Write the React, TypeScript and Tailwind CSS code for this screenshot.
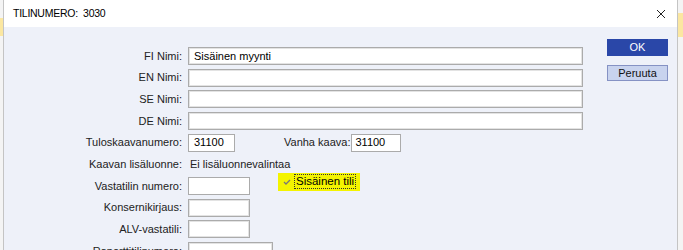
import React from 'react';

const font = { fontFamily: '"Liberation Sans", Arial, sans-serif' };

const Field = ({ label, width, value }: { label: string; width: string; value?: string }) => (
  <div className="flex items-center h-[21.7px]">
    <div className="w-[178px] text-right text-[#222] whitespace-nowrap">{label}</div>
    <div className={`ml-[6px] h-[18px] ${width} bg-white border border-[#ababab] shadow-[inset_0_0_0_1px_#e3e3e3] pl-[5px] flex items-center text-black`}>
      {value}
    </div>
  </div>
);

export default function App() {
  return (
    <div
      className="relative w-[683px] h-[250px] overflow-hidden bg-[#f4f4f4] text-[11px]"
      style={font}
    >
      {/* yellow strips behind the dialog */}
      <div className="absolute left-0 top-[18px] w-[3px] h-[18px] bg-[#fbe7a1]" />
      <div className="absolute right-0 top-[13px] w-[6px] h-[24px] bg-[#fbe7a1]" />

      <div className="absolute left-[3px] top-0 w-[675px] h-[250px] border-l border-r border-[#c4c4c4] flex flex-col">
        <div className="h-[27px] bg-white flex items-center justify-between pl-[9px] pr-[8px] shrink-0">
          <span className="text-[10.5px] text-black tracking-tight">TILINUMERO:&nbsp; 3030</span>
          <svg width="10" height="10" viewBox="0 0 10 10" className="mr-[3px]">
            <path d="M1 1 L9 9 M9 1 L1 9" stroke="#222" strokeWidth="1" />
          </svg>
        </div>

        <div className="flex-1 bg-[#eef1f9] flex">
          <div className="flex flex-col pt-[18px] w-[590px]">
            <Field label="FI Nimi:" width="w-[395px]" value="Sisäinen myynti" />
            <Field label="EN Nimi:" width="w-[395px]" />
            <Field label="SE Nimi:" width="w-[395px]" />
            <Field label="DE Nimi:" width="w-[395px]" />

            <div className="flex items-center h-[21.7px]">
              <div className="w-[178px] text-right text-[#222] whitespace-nowrap">Tuloskaavanumero:</div>
              <div className="ml-[6px] h-[18px] w-[47px] bg-white border border-[#ababab] pl-[5px] flex items-center text-black">31100</div>
              <div className="ml-[49px] text-[#222] whitespace-nowrap">Vanha kaava:</div>
              <div className="ml-[1px] h-[18px] w-[50px] bg-white border border-[#ababab] pl-[3px] flex items-center text-black">31100</div>
            </div>

            <div className="flex items-center h-[21.7px]">
              <div className="w-[178px] text-right text-[#222] whitespace-nowrap">Kaavan lisäluonne:</div>
              <div className="ml-[8px] text-[#222]">Ei lisäluonnevalintaa</div>
            </div>

            <div className="flex items-center h-[21.7px]">
              <div className="w-[178px] text-right text-[#222] whitespace-nowrap">Vastatilin numero:</div>
              <div className="ml-[6px] h-[18px] w-[62px] bg-white border border-[#ababab]" />
              <div className="ml-[28px] -mt-[8px] h-[18px] w-[82px] bg-[#f4f400] flex items-center pl-[5px] gap-[3px] whitespace-nowrap">
                <svg width="8" height="8" viewBox="0 0 8 8" className="shrink-0">
                  <path d="M1 4 L3 6 L7 2" stroke="#777" strokeWidth="1.3" fill="none" />
                </svg>
                <span className="border border-dotted border-[#333] px-[1px] leading-[13px] text-[11.5px] text-black">Sisäinen tili</span>
              </div>
            </div>

            <Field label="Konsernikirjaus:" width="w-[62px]" />
            <Field label="ALV-vastatili:" width="w-[62px]" />
            <Field label="Raporttitilinumero:" width="w-[85px]" />
          </div>

          <div className="flex flex-col pt-[12px] ml-[13px] gap-[9px]">
            <button className="w-[61px] h-[17px] bg-[#2a47a8] text-white text-[11px] leading-none">OK</button>
            <button className="w-[61px] h-[16px] bg-[#c8d3ee] border border-[#8592c4] text-[#111] text-[11px] leading-none">Peruuta</button>
          </div>
        </div>
      </div>
    </div>
  );
}
